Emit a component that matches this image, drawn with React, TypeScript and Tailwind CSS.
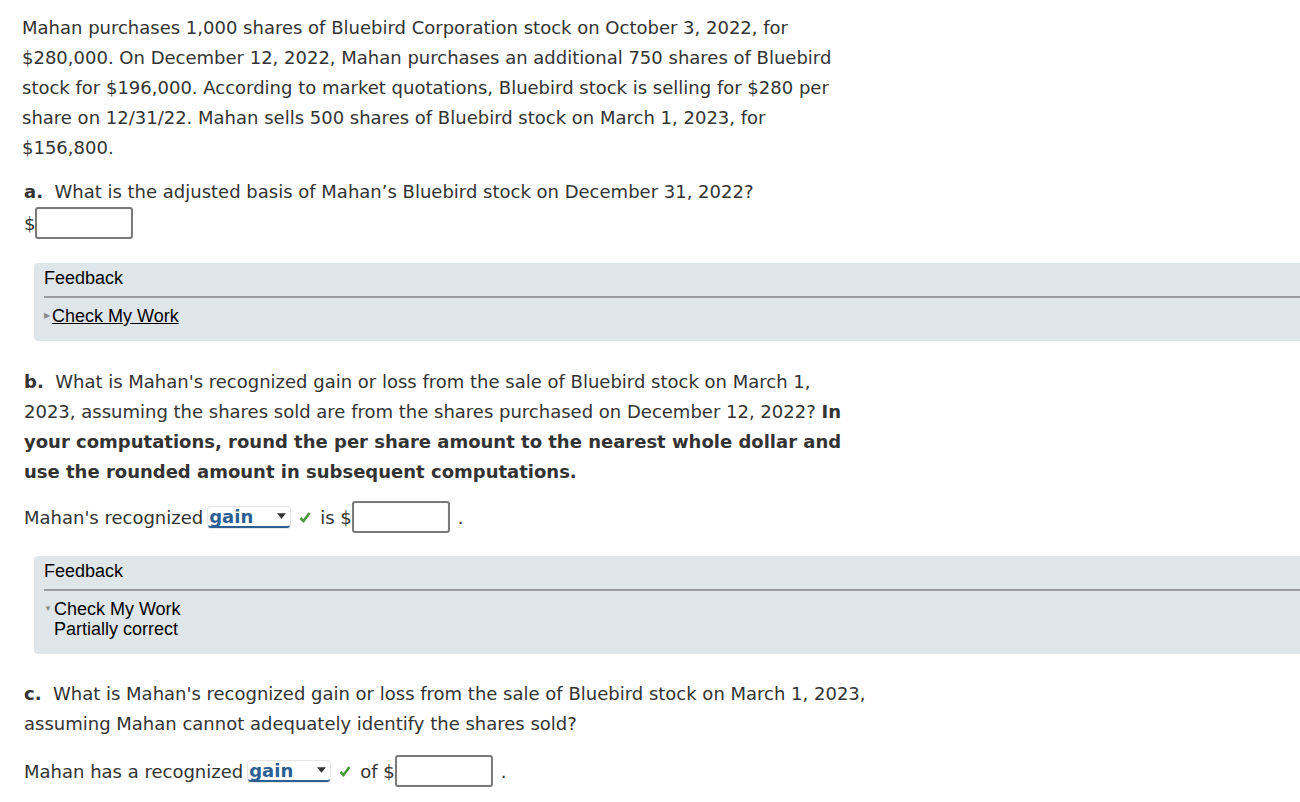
const verdana = { fontFamily: '"DejaVu Sans", Verdana, sans-serif' };

const AnswerBox = () => (
	<span className="inline-block h-[32px] w-[98px] rounded-[3px] border-2 border-[#7a7a7a] bg-white align-middle shadow-[inset_0_0_1px_rgba(0,0,0,0.2)]" />
);

const GainSelect = () => (
	<span className="relative inline-flex h-[21px] w-[82px] items-center rounded-[3px] border-b-2 border-[#2b5f93] bg-white align-middle shadow-[0_0_0_1px_#e6e6e6]">
		<span className="pl-[1px] font-bold text-[#2b5f93]">gain</span>
		<svg viewBox="0 0 10 6" className="absolute right-[4px] top-[6px] h-[6px] w-[9px]" fill="#333">
			<path d="M0 0h10L5 6z" />
		</svg>
	</span>
);

const Check = () => (
	<svg viewBox="0 0 12 12" className="mx-[9px] inline-block h-[13px] w-[12px] align-middle" fill="none" stroke="#4a963c" strokeWidth="2.6">
		<path d="M1.5 6.5 4.5 9.5 10.5 1.5" />
	</svg>
);

const Feedback = ({ open }: { open: boolean }) => (
	<div
		className="ml-[34px] rounded-l-[4px] bg-[#dfe6e9] pb-[15px] pl-[10px] pt-[4px] text-[18px] text-black"
		style={{ fontFamily: '"Liberation Sans", Arial, sans-serif' }}
	>
		<div className="h-[22px] leading-[22px]">Feedback</div>
		<div className="mt-[7px] h-[2px] bg-[#989b9e]" />
		<div className="mt-[8px] flex items-start">
			<span className="mr-[2px] mt-[6px] inline-block text-[8px] leading-none text-[#8a8a8a]">
				{open ? '▼' : '▶'}
			</span>
			<div className="leading-[20px]">
				{open ? (
					<>
						<div>Check My Work</div>
						<div>Partially correct</div>
					</>
				) : (
					<span className="underline">Check My Work</span>
				)}
			</div>
		</div>
	</div>
);

export default function App() {
	return (
		<div className="min-h-[802px] w-[1300px] overflow-hidden bg-white text-[18px] text-[#333]" style={verdana}>
			<p className="whitespace-nowrap pl-[22px] pt-[13px] leading-[30px]">
				Mahan purchases 1,000 shares of Bluebird Corporation stock on October 3, 2022, for
				<br />
				$280,000. On December 12, 2022, Mahan purchases an additional 750 shares of Bluebird
				<br />
				stock for $196,000. According to market quotations, Bluebird stock is selling for $280 per
				<br />
				share on 12/31/22. Mahan sells 500 shares of Bluebird stock on March 1, 2023, for
				<br />
				$156,800.
			</p>

			<p className="mt-[14px] whitespace-nowrap pl-[24px] leading-[30px]">
				<b>a.</b>&nbsp; What is the adjusted basis of Mahan’s Bluebird stock on December 31, 2022?
			</p>
			<div className="flex items-center pl-[24px]">
				<span>$</span>
				<AnswerBox />
			</div>

			<div className="mt-[24px]">
				<Feedback open={false} />
			</div>

			<p className="mt-[26px] whitespace-nowrap pl-[24px] leading-[30px]">
				<b>b.</b>&nbsp; What is Mahan's recognized gain or loss from the sale of Bluebird stock on March 1,
				<br />
				2023, assuming the shares sold are from the shares purchased on December 12, 2022? <b>In</b>
				<br />
				<b>your computations, round the per share amount to the nearest whole dollar and</b>
				<br />
				<b>use the rounded amount in subsequent computations.</b>
			</p>
			<div className="mt-[14px] flex items-center whitespace-nowrap pl-[24px]">
				<span className="mr-[5px]">Mahan's recognized</span>
				<GainSelect />
				<Check />
				<span>is $</span>
				<AnswerBox />
				<span className="ml-[8px]">.</span>
			</div>

			<div className="mt-[23px]">
				<Feedback open />
			</div>

			<p className="mt-[25px] whitespace-nowrap pl-[24px] leading-[30px]">
				<b>c.</b>&nbsp; What is Mahan's recognized gain or loss from the sale of Bluebird stock on March 1, 2023,
				<br />
				assuming Mahan cannot adequately identify the shares sold?
			</p>
			<div className="mt-[16px] flex items-center whitespace-nowrap pl-[24px]">
				<span className="mr-[5px]">Mahan has a recognized</span>
				<GainSelect />
				<Check />
				<span>of $</span>
				<AnswerBox />
				<span className="ml-[8px]">.</span>
			</div>
		</div>
	);
}
